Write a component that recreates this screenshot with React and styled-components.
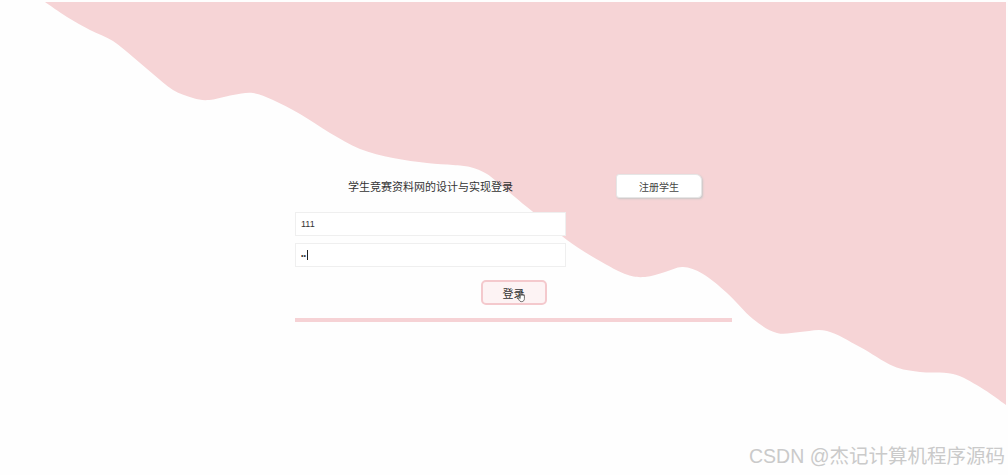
import React, { Component } from 'react';
import styled, { createGlobalStyle } from 'styled-components'


const GlobalStyle = createGlobalStyle`
html, body {
  margin: 0;
  padding: 0;
  background: #fefefe;
}
body {
  font-family: "Noto Sans CJK SC", "Noto Sans", sans-serif;
}`

const Page = styled.div`
position: relative;
width: 1008px;
height: 475px;
overflow: hidden;
background: #fefefe;`

const Wave = styled.svg`
position: absolute;
left: 0;
top: 0;
z-index: 0;`

const Content = styled.div`
position: relative;
z-index: 1;
display: flex;
flex-direction: column;
height: 100%;
box-sizing: border-box;
padding: 174px 0 0 295px;`

const Card = styled.form`
width: 437px;
display: flex;
flex-direction: column;`

const Header = styled.div`
display: flex;
align-items: center;
height: 24px;`

const Title = styled.h1`
width: 271px;
margin: 0;
text-align: center;
font-size: 11px;
font-weight: 400;
color: #333;
line-height: 24px;`

const RegisterButton = styled.button`
margin-left: auto;
margin-right: 30px;
width: 86px;
height: 24px;
padding: 0;
font-family: inherit;
font-size: 10px;
color: #444;
background: #fff;
border: 1px solid #e6e6e6;
border-radius: 3px 6px 4px 3px;
box-shadow: 1px 1px 2px #c8c8c8;`

const Fields = styled.div`
display: flex;
flex-direction: column;
gap: 7px;
margin-top: 14px;`

const Input = styled.input`
display: block;
width: 271px;
height: 24px;
box-sizing: border-box;
padding: 0 5px;
font-family: "Liberation Sans", sans-serif;
font-size: ${(p) => (p.type === 'password' ? '7px' : '9px')};
color: #333;
background: #fff;
border: 1px solid #efefef;
outline: none;`

const Caret = styled.span`
position: absolute;
left: 12px;
top: 7px;
width: 1px;
height: 10px;
background: #222;`

const FieldWrap = styled.div`
position: relative;
width: 271px;`

const Actions = styled.div`
display: flex;
justify-content: center;
margin-top: 13px;`

const LoginButton = styled.button`
position: relative;
width: 66px;
height: 25px;
padding: 0;
font-family: inherit;
font-size: 11px;
color: #333;
background: #fdf3f4;
border: 2px solid #f4c9cd;
border-radius: 5px;`

const Cursor = styled.svg`
position: absolute;
left: 34px;
top: 7px;`

const Bar = styled.div`
width: 437px;
height: 4px;
margin-top: 13px;
background: #f6d2d5;`

const Watermark = styled.div`
position: absolute;
right: 3px;
bottom: 6px;
z-index: 1;
font-family: "Liberation Sans", "Noto Sans CJK SC", sans-serif;
font-size: 19.5px;
color: #cacaca;`

const edge = [
  [45, 2], [67, 17], [90, 30], [113, 41], [133, 57], [153, 74], [173, 90], [193, 98],
  [209, 100], [233, 95], [253, 93], [273, 100], [300, 114], [330, 133], [360, 149],
  [393, 158], [427, 163], [453, 165], [470, 167], [487, 174], [503, 187], [527, 207],
  [547, 223], [567, 240], [593, 257], [625, 274], [645, 277], [665, 272], [683, 267],
  [703, 274], [727, 293], [753, 319], [777, 333], [800, 332], [827, 331], [860, 347],
  [893, 366], [920, 372], [953, 374], [980, 387], [1006, 405],
]

// catmull-rom through the traced edge points
const smooth = (pts) => {
  let d = `M${pts[0][0]},${pts[0][1]}`
  for (let i = 0; i < pts.length - 1; i++) {
    const p0 = pts[i - 1] || pts[i]
    const p1 = pts[i]
    const p2 = pts[i + 1]
    const p3 = pts[i + 2] || p2
    const c1x = p1[0] + (p2[0] - p0[0]) / 6
    const c1y = p1[1] + (p2[1] - p0[1]) / 6
    const c2x = p2[0] - (p3[0] - p1[0]) / 6
    const c2y = p2[1] - (p3[1] - p1[1]) / 6
    d += ` C${c1x},${c1y} ${c2x},${c2y} ${p2[0]},${p2[1]}`
  }
  return d + ' L1006,2 Z'
}

export default class App extends Component {
  state = { user: '111', pass: '11' };

  handleChange = (e) => this.setState({ [e.target.name]: e.target.value });

  handleSubmit = (e) => {
    e.preventDefault();
  };

  render() {
    return (
      <Page>
        <GlobalStyle />
        <Wave width="1008" height="475" viewBox="0 0 1008 475">
          <path d={smooth(edge)} fill="#f6d4d6" />
        </Wave>
        <Content>
          <Card onSubmit={this.handleSubmit}>
            <Header>
              <Title>学生竞赛资料网的设计与实现登录</Title>
              <RegisterButton type="button">注册学生</RegisterButton>
            </Header>
            <Fields>
              <Input
                name="user"
                type="text"
                value={this.state.user}
                onChange={this.handleChange}
                autoComplete="off"
              />
              <FieldWrap>
                <Input
                  name="pass"
                  type="password"
                  value={this.state.pass}
                  onChange={this.handleChange}
                  autoComplete="off"
                />
                <Caret />
              </FieldWrap>
            </Fields>
            <Actions>
              <LoginButton type="submit">
                登录
                <Cursor width="10" height="14" viewBox="0 0 10 14">
                  <path
                    d="M3.2 1.2c0-.6.9-.6.9 0v5.2l.2-1c0-.6.9-.6.9 0v1l.2-.7c0-.6.9-.6.9 0v.9l.2-.5c0-.5.9-.5.9 0v3.6c0 1.6-1 2.9-2.6 2.9H4.2c-1 0-1.6-.6-2.1-1.4L.8 8.6c-.3-.5.3-1 .8-.6l1.6 1.5z"
                    fill="#fff"
                    stroke="#333"
                    strokeWidth="0.7"
                    strokeLinejoin="round"
                  />
                </Cursor>
              </LoginButton>
            </Actions>
            <Bar />
          </Card>
        </Content>
        <Watermark>CSDN @杰记计算机程序源码</Watermark>
      </Page>
    );
  }
}
